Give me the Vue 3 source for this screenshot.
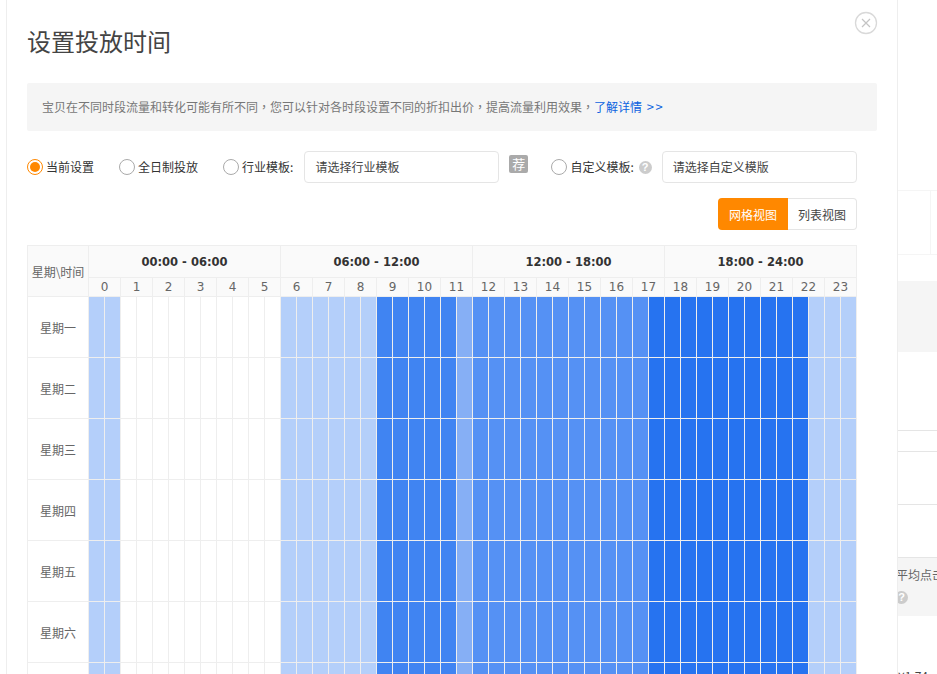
<script setup>
const groups = ['00:00 - 06:00', '06:00 - 12:00', '12:00 - 18:00', '18:00 - 24:00']
const hours = Array.from({ length: 24 }, (_, i) => i)
const days = ['星期一', '星期二', '星期三', '星期四', '星期五', '星期六', '星期日']

// Discount level of each half hour of the day
const levelOf = (h) => {
  if (h < 2) return 'light'
  if (h < 12) return 'none'
  if (h < 18) return 'light'
  if (h < 23) return 'strong'
  if (h < 24) return 'soft'
  if (h < 35) return 'mid'
  if (h < 45) return 'deep'
  return 'light'
}
const halves = Array.from({ length: 48 }, (_, i) => levelOf(i))

const radios = [
  { label: '当前设置', on: true, cls: 'r1' },
  { label: '全日制投放', on: false, cls: 'r2' }
]
</script>

<template>
  <div class="page">
    <section class="dialog">
      <header class="head">
        <h1 class="title">设置投放时间</h1>
        <button class="close" type="button" aria-label="关闭">
          <svg width="24" height="24" viewBox="0 0 24 24">
            <circle cx="12" cy="12" r="10.5" fill="none" stroke="#d9d9d9" stroke-width="1.3" />
            <path d="M8 8l8 8M16 8l-8 8" fill="none" stroke="#c4c4c4" stroke-width="1.2" />
          </svg>
        </button>
      </header>

      <div class="notice">
        宝贝在不同时段流量和转化可能有所不同<span class="comma">，</span>您可以针对各时段设置不同的折扣出价<span class="comma">，</span>提高流量利用效果<span class="comma">，</span><a class="more">了解详情 <span class="arrows">&gt;&gt;</span></a>
      </div>

      <div class="options">
        <label v-for="r in radios" :key="r.label" class="radio" :class="r.cls">
          <span class="dot" :class="{ on: r.on }"></span>{{ r.label }}
        </label>
        <label class="radio r3"><span class="dot"></span>行业模板:</label>
        <div class="select industry">请选择行业模板</div>
        <span class="tag">荐</span>
        <label class="radio r4"><span class="dot"></span>自定义模板:</label>
        <span class="help">?</span>
        <div class="select custom">请选择自定义模版</div>
      </div>

      <div class="views">
        <button class="view active" type="button">网格视图</button>
        <button class="view" type="button">列表视图</button>
      </div>

      <div class="grid">
        <div class="corner">星期\时间</div>
        <div v-for="g in groups" :key="g" class="group">{{ g }}</div>
        <div v-for="h in hours" :key="h" class="hour">{{ h }}</div>
        <template v-for="d in days" :key="d">
          <div class="day">{{ d }}</div>
          <div v-for="(lv, i) in halves" :key="i" class="cell" :class="lv"></div>
        </template>
      </div>
    </section>

    <aside class="behind">
      <div class="b-row"><span class="b-col"></span></div>
      <div class="b-band"></div>
      <div class="b-line first"></div>
      <div class="b-line second"></div>
      <div class="b-line third"></div>
      <div class="b-foot">
        <div class="b-text">平均点击花费</div>
        <span class="b-help">?</span>
      </div>
      <div class="b-price">¥1.74</div>
    </aside>
  </div>
</template>

<style scoped>
.page {
  display: flex;
  width: 937px;
  height: 674px;
  overflow: hidden;
  background: #fff;
  font-family: "DejaVu Sans", "Noto Sans CJK SC", sans-serif;
  font-size: 12px;
  color: #333;
}
.dialog {
  flex: none;
  box-sizing: border-box;
  width: 892px;
  height: 674px;
  margin-left: 6px;
  padding: 0 20px 0 20px;
  border-left: 1px solid #eee;
  border-right: 1px solid #eee;
  background: #fff;
}
.head {
  display: flex;
  justify-content: space-between;
  align-items: flex-start;
  height: 83px;
}
.title {
  margin: 26px 0 0;
  font-family: "Noto Sans CJK SC", sans-serif;
  font-size: 24px;
  line-height: 30px;
  font-weight: 400;
  color: #444;
}
.close {
  width: 24px;
  height: 24px;
  margin: 11px -1px 0 0;
  padding: 0;
  border: 0;
  background: none;
}
.close svg { display: block; }
.notice {
  box-sizing: border-box;
  height: 48px;
  padding: 0 15px;
  border-radius: 2px;
  background: #f5f5f5;
  font-family: "Noto Sans CJK SC", sans-serif;
  line-height: 48px;
  color: #777;
  white-space: nowrap;
}
.comma { font-family: "Noto Sans CJK TC", sans-serif; }
.more { color: #0b62e0; }
.arrows { margin-left: 2px; font-size: 13px; letter-spacing: 1.5px; }
.options {
  display: flex;
  align-items: center;
  height: 32px;
  margin-top: 20px;
  font-family: "Noto Sans CJK SC", sans-serif;
}
.radio {
  display: flex;
  align-items: center;
  gap: 3px;
  padding-bottom: 2px;
  color: #333;
  white-space: nowrap;
}
.r2 { margin-left: 25px; }
.r3 { margin-left: 25px; }
.r4 { margin-left: 23px; }
.dot {
  display: flex;
  align-items: center;
  justify-content: center;
  box-sizing: border-box;
  width: 16px;
  height: 16px;
  margin-top: 2px;
  border: 1px solid #aaa;
  border-radius: 50%;
  background: #fff;
}
.dot.on { border-color: #ff8800; }
.dot.on::after {
  content: "";
  width: 10px;
  height: 10px;
  border-radius: 50%;
  background: #ff8800;
}
.select {
  box-sizing: border-box;
  height: 32px;
  padding: 0 10px;
  border: 1px solid #e5e5e5;
  border-radius: 4px;
  background: #fff;
  line-height: 29px;
  color: #444;
}
.industry { width: 195px; margin-left: 11px; }
.custom { width: 195px; margin-left: 10px; }
.tag {
  width: 19px;
  height: 18px;
  margin: -6px 0 0 10px;
  border-radius: 2px;
  background: #aaa;
  color: #fff;
  font-size: 13px;
  line-height: 18px;
  text-align: center;
}
.help {
  width: 13px;
  height: 13px;
  margin-left: 5px;
  border-radius: 50%;
  background: #ccc;
  color: #fff;
  font: bold 11px/13px "Liberation Sans", sans-serif;
  text-align: center;
}
.views {
  display: flex;
  justify-content: flex-end;
  height: 32px;
  margin: 15px 20px 15px 0;
}
.view {
  box-sizing: border-box;
  width: 69px;
  height: 32px;
  padding: 0;
  border: 1px solid #e5e5e5;
  border-left: 0;
  border-radius: 0 4px 4px 0;
  background: #fff;
  font: 12px "Noto Sans CJK SC", sans-serif;
  color: #444;
}
.view.active {
  width: 70px;
  border: 0;
  border-radius: 4px 0 0 4px;
  background: #ff8800;
  color: #fff;
}
.grid {
  display: grid;
  grid-template-columns: 61px repeat(48, 16px);
  grid-template-rows: 32px 19px repeat(7, 61px);
  width: 830px;
  box-sizing: border-box;
  border-left: 1px solid #eee;
  border-top: 1px solid #eee;
}
.corner, .group, .hour, .day, .cell {
  box-sizing: border-box;
  border-right: 1px solid #eee;
  border-bottom: 1px solid #eee;
}
.corner {
  grid-row: span 2;
  display: flex;
  align-items: flex-end;
  justify-content: center;
  padding-bottom: 16px;
  background: #fafafa;
  font-family: "Noto Sans CJK SC", sans-serif;
  color: #666;
  white-space: nowrap;
}
.group {
  grid-column: span 12;
  background: #fafafa;
  font-size: 11.5px;
  font-weight: 700;
  line-height: 33px;
  text-align: center;
  color: #333;
}
.hour {
  grid-column: span 2;
  background: #fafafa;
  font-size: 12px;
  line-height: 19px;
  text-align: center;
  color: #666;
}
.day {
  font-family: "Noto Sans CJK SC", sans-serif;
  line-height: 62px;
  text-align: center;
  color: #666;
}
.light { background: #b4cffa; }
.strong { background: #4084f2; }
.soft { background: #86aff5; }
.mid { background: #5591f4; }
.deep { background: #2673f0; }

.behind {
  flex: none;
  width: 39px;
  font-family: "Noto Sans CJK SC", sans-serif;
  white-space: nowrap;
  color: #666;
}
.b-row {
  box-sizing: border-box;
  height: 65px;
  margin-top: 190px;
  border-top: 1px solid #f5f5f5;
  border-bottom: 1px solid #f5f5f5;
}
.b-col {
  display: block;
  width: 32px;
  height: 100%;
  border-right: 1px solid #f5f5f5;
}
.b-band {
  height: 71px;
  margin-top: 26px;
  background: #f5f5f5;
}
.b-line { border-top: 1px solid #e5e5e5; }
.b-line.first { margin-top: 78px; }
.b-line.second { margin-top: 20px; }
.b-line.third { margin-top: 52px; }
.b-foot {
  box-sizing: border-box;
  height: 59px;
  margin-top: 52px;
  padding-top: 8px;
  border-top: 1px solid #e5e5e5;
  background: #f5f5f5;
  overflow: hidden;
}
.b-text { margin-left: -2px; line-height: 18px; }
.b-help {
  display: block;
  width: 13px;
  height: 13px;
  margin: 7px 0 0 -3px;
  border-radius: 50%;
  background: #ccc;
  color: #fff;
  font: bold 11px/13px "Liberation Sans", sans-serif;
  text-align: center;
}
.b-price {
  margin-top: 53px;
  line-height: 14px;
  color: #444;
}
</style>
